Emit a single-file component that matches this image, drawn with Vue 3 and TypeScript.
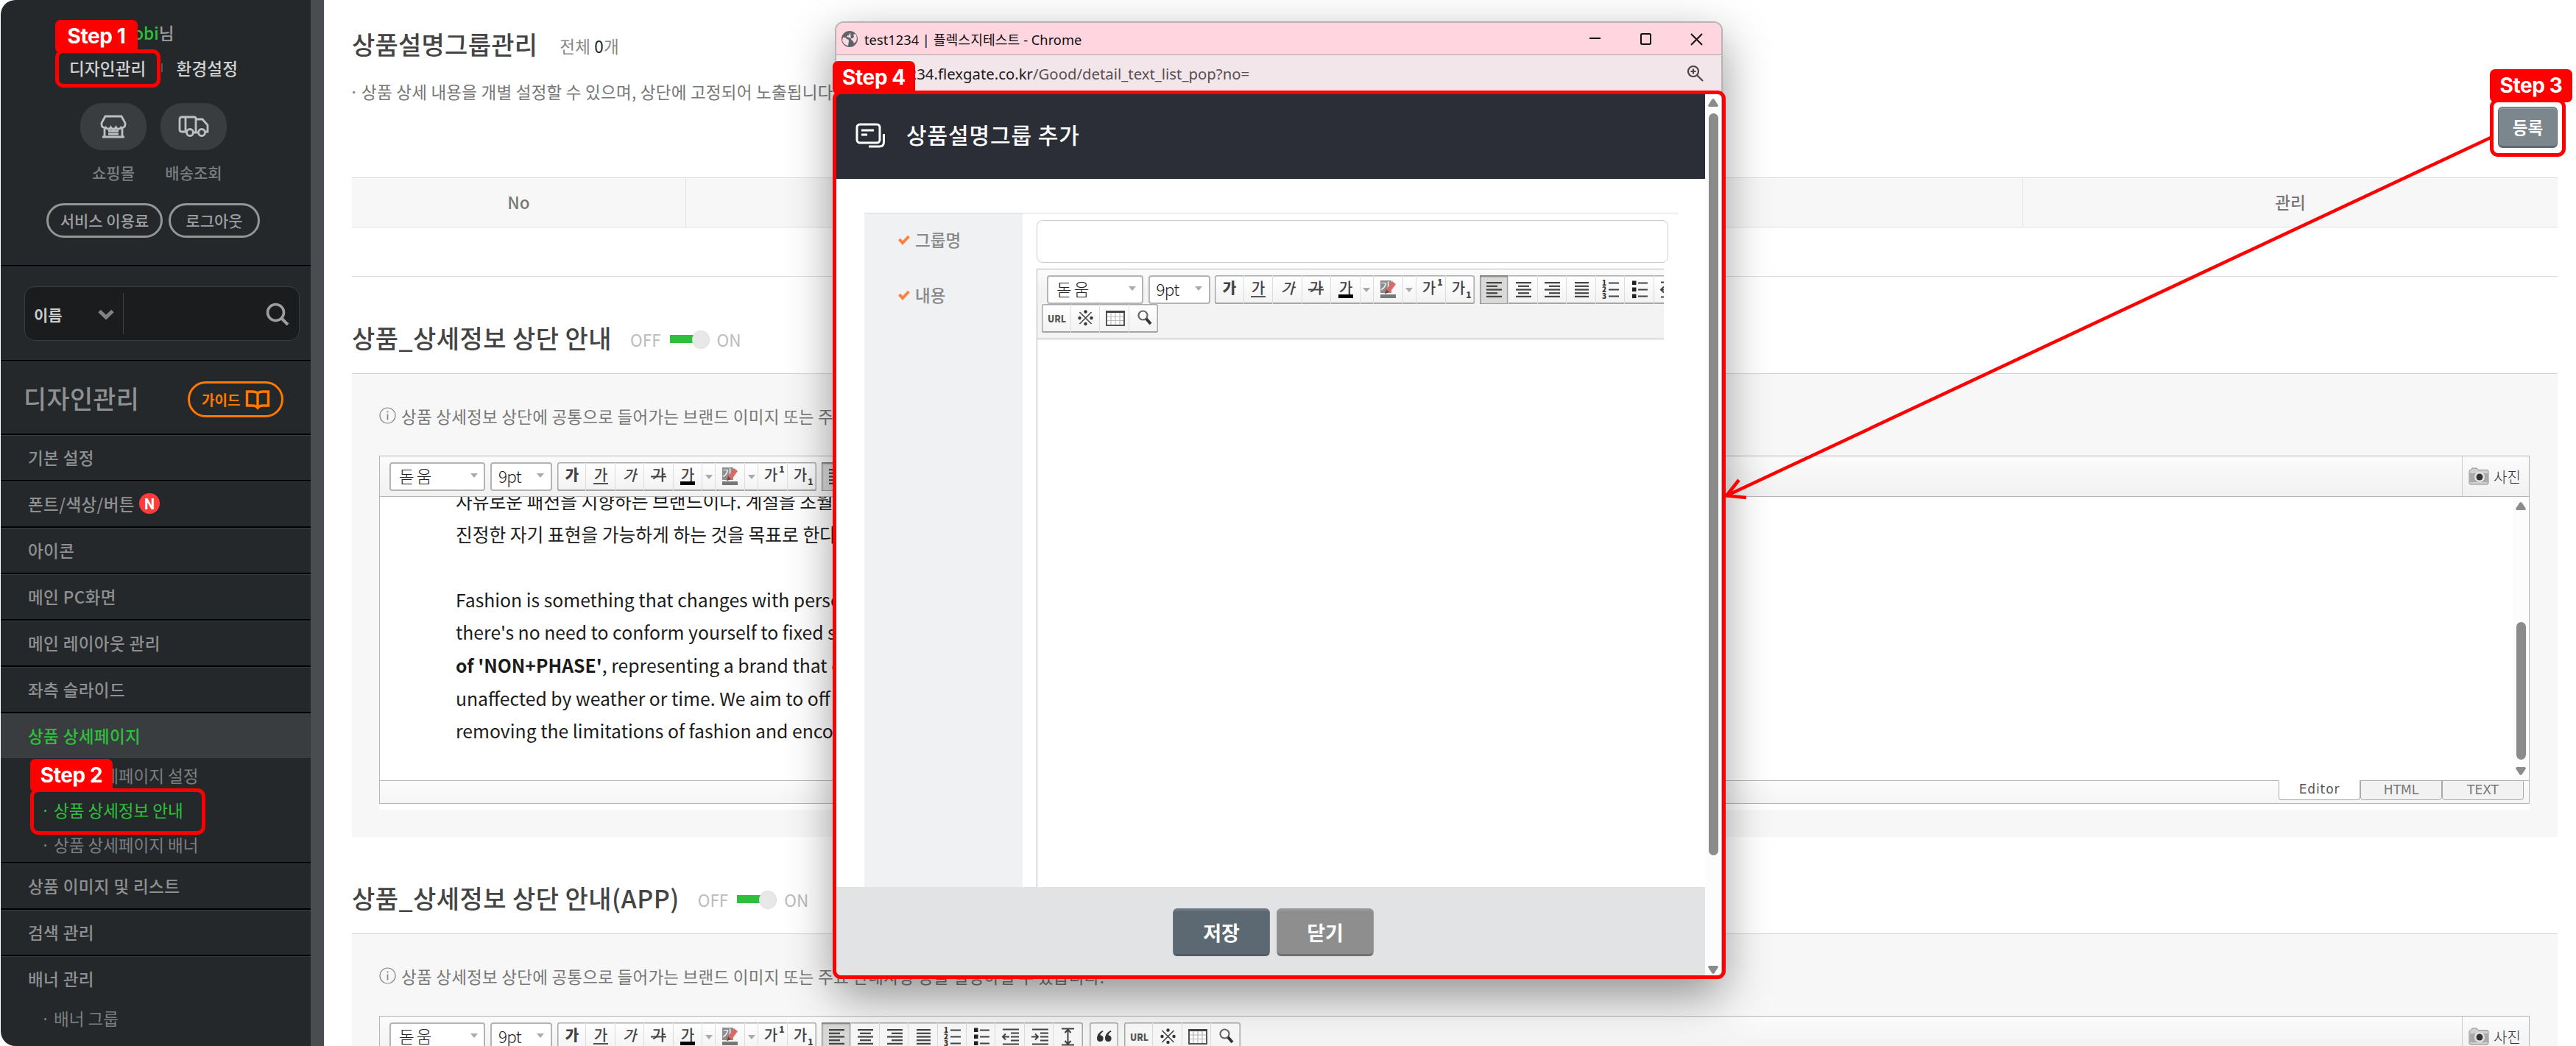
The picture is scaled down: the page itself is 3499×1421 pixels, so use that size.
<script setup lang="ts">
type Item = { label: string; badge?: boolean; active?: boolean; subs?: { label: string; on?: boolean }[] }

const menu: Item[] = [
  { label: '기본 설정' },
  { label: '폰트/색상/버튼', badge: true },
  { label: '아이콘' },
  { label: '메인 PC화면' },
  { label: '메인 레이아웃 관리' },
  { label: '좌측 슬라이드' },
  {
    label: '상품 상세페이지',
    active: true,
    subs: [{ label: '상품 상세페이지 설정' }, { label: '상품 상세정보 안내', on: true }, { label: '상품 상세페이지 배너' }],
  },
  { label: '상품 이미지 및 리스트' },
  { label: '검색 관리' },
  { label: '배너 관리', subs: [{ label: '배너 그룹' }] },
]

const sections = [
  { title: '상품_상세정보 상단 안내', body: true },
  { title: '상품_상세정보 상단 안내(APP)', body: false },
]

const ga = (extra = '', weight = 500, dx = 0) =>
  `<text x="${20 + dx}" y="25" font-size="20" font-weight="${weight}" text-anchor="middle" fill="#444">가</text>${extra}`
const bars = (rows: [number, number][]) =>
  rows.map(([x, w], i) => `<rect x="${x + 1}" y="${9 + i * 4.7}" width="${w}" height="2.2" fill="#444"/>`).join('')

const icons: Record<string, string> = {
  bold: ga('', 900),
  under: ga('<rect x="10" y="28" width="20" height="2" fill="#555"/>'),
  ital: '<g transform="translate(6.5 0) skewX(-14)">' + ga('', 500) + '</g>',
  strike: ga('<rect x="9" y="18.5" width="21" height="2" fill="#444"/>'),
  color: ga('<rect x="10" y="26" width="20" height="5" fill="#000"/>'),
  hl: '<rect x="9" y="7" width="15" height="17" fill="#8d8d8d"/><text x="16" y="21" font-size="15" text-anchor="middle" fill="#fff">가</text><rect x="9" y="26" width="21" height="5" fill="#777"/><path d="M15 25l2-6 8-11 5 4-8 11z" fill="#d96a68"/><path d="M15 25l2-6 4 4z" fill="#6b4a3a"/>',
  sup: ga('<text x="32" y="14" font-size="12" font-weight="900" text-anchor="middle" fill="#444">1</text>', 500, -3),
  sub: ga('<text x="31" y="31" font-size="12" font-weight="900" text-anchor="middle" fill="#444">1</text>', 500, -3),
  left: bars([[9, 21], [9, 15], [9, 21], [9, 15], [9, 21]]),
  center: bars([[9, 21], [12, 15], [9, 21], [12, 15], [9, 21]]),
  right: bars([[9, 21], [15, 15], [9, 21], [15, 15], [9, 21]]),
  full: bars([[10, 19], [10, 19], [10, 19], [10, 19], [10, 19]]),
  ol: '<g fill="#333" font-size="10" font-weight="900"><text x="9" y="14">1</text><text x="9" y="23">2</text><text x="9" y="32">3</text></g><path d="M18 10.500h14M18 19.500h14M18 28.500h14" stroke="#444" stroke-width="2"/>',
  ul: '<path d="M10 7.500h5.500v5.500h-5.500zM10 16.500h5.500v5.500h-5.500zM10 25.500h5.500v5.500h-5.500z" fill="#222"/><path d="M18 10.500h13M18 19.500h13M18 28.500h13" stroke="#444" stroke-width="2"/>',
  outdent: '<path d="M10 9.500h22M21 14.500h11M21 19.500h11M21 24.500h11M10 29.500h22M10 19.500h9M14 15.500l-4 4l4 4" stroke="#444" stroke-width="2" fill="none"/>',
  indent: '<path d="M10 9.500h22M21 14.500h11M21 19.500h11M21 24.500h11M10 29.500h22M9 19.500h9M14 15.500l4 4l-4 4" stroke="#444" stroke-width="2" fill="none"/>',
  height: '<path d="M11 8.500h17M11 30.500h17M19.500 9v21M15.500 14l4-4.500l4 4.500M15.500 25l4 4.500l4-4.500" stroke="#444" stroke-width="2" fill="none"/>',
  quote: '<path d="M18 11c-5 2-8 6-8 11a4.300 4.300 0 1 0 4.500-4.500c0-2 1.500-4 4-5zM29 11c-5 2-8 6-8 11a4.300 4.300 0 1 0 4.500-4.500c0-2 1.500-4 4-5z" fill="#333"/>',
  url: '<text x="20.500" y="24.500" font-size="13.500" font-weight="900" text-anchor="middle" fill="#555" textLength="25" lengthAdjust="spacingAndGlyphs">URL</text>',
  special: '<path d="M12.500 11l16 16M28.500 11l-16 16" stroke="#444" stroke-width="1.600"/><g fill="#333"><circle cx="20.500" cy="10.500" r="2.200"/><circle cx="20.500" cy="27" r="2.200"/><circle cx="12.500" cy="19" r="2.200"/><circle cx="28.500" cy="19" r="2.200"/></g>',
  table: '<rect x="9" y="10" width="24" height="19" fill="#fff" stroke="#555" stroke-width="2"/><path d="M8 10.500h26" stroke="#444" stroke-width="3"/><path d="M15 12v16M21 12v16M27 12v16M10 17h22M10 22.500h22" stroke="#bbb" stroke-width="1.200"/>',
  find: '<circle cx="18.500" cy="15.500" r="6" fill="#fff" stroke="#666" stroke-width="2.200"/><path d="M23 20l6 7" stroke="#333" stroke-width="4"/>',
}

const format = ['bold', 'under', 'ital', 'strike', 'color', 'caret', 'hl', 'caret', 'sup', 'sub']
const align = ['left', 'center', 'right', 'full', 'ol', 'ul', 'outdent', 'indent', 'height']
const insert = ['url', 'special', 'table', 'find']
const mainGroups = [format, align, ['quote'], insert]
</script>

<template>
  <div class="page">
    <aside class="side">
      <div class="profile">
        <p class="who"><b>mobi</b>님</p>
        <p class="links"><span>디자인관리</span><i></i><span>환경설정</span></p>
        <div class="quick">
          <div>
            <span class="pill">
              <svg width="36" height="32" viewBox="0 0 36 32" fill="none" stroke="#bdbfc0" stroke-width="2.8">
                <path d="M7 2h22l5 9v2a4 4 0 0 1-5.500 4a4 4 0 0 1-7 0a4 4 0 0 1-7 0a4 4 0 0 1-7 0a4 4 0 0 1-5.500-4v-2zM6 18v11M30 18v11M3 30h30M11 22h14M11 26h14" />
              </svg>
            </span>
            <em>쇼핑몰</em>
          </div>
          <div>
            <span class="pill">
              <svg width="42" height="30" viewBox="0 0 42 30" fill="none" stroke="#bdbfc0" stroke-width="2.800">
                <path d="M24 22V4q0-2-2-2H5Q2 2 2 5v14q0 3 3 3h6M10 2v20M21 23h6M24 5h9l7 8v9h-3" />
                <circle cx="16" cy="23" r="4.500" /><circle cx="32" cy="23" r="4.500" />
              </svg>
            </span>
            <em>배송조회</em>
          </div>
        </div>
        <div class="acts"><span class="fee">서비스 이용료</span><span class="out">로그아웃</span></div>
      </div>
      <div class="search">
        <div class="box">
          <span class="kind">이름</span>
          <svg class="chev" width="22" height="15" viewBox="0 0 22 15"><path d="M2 2.500l9 8.500l9-8.500" fill="none" stroke="#808284" stroke-width="5" /></svg>
          <i></i>
          <svg class="mag" width="32" height="32" viewBox="0 0 32 32" fill="none" stroke="#9c9e9f" stroke-width="3.600">
            <circle cx="13.500" cy="13.500" r="11" /><path d="M21 21l9 9" stroke-width="4" />
          </svg>
        </div>
      </div>
      <div class="cap">
        <h1>디자인관리</h1>
        <span class="guide">가이드
          <svg width="34" height="28" viewBox="0 0 34 28" fill="none" stroke="#ff7800" stroke-width="3.400">
            <path d="M17 5.500Q15 3 10 3H2.500v19H10q5 0 7 3q2-3 7-3h7.500V3H24q-5 0-7 2.500zM17 5v19" />
          </svg>
        </span>
      </div>
      <template v-for="m in menu" :key="m.label">
        <div class="item" :class="{ active: m.active }">{{ m.label }}<span v-if="m.badge" class="n">N</span></div>
        <div v-for="s in m.subs" :key="s.label" class="sub" :class="{ on: s.on }"><i>·</i>{{ s.label }}</div>
      </template>
    </aside>
    <div class="strip"></div>

    <main>
      <div class="head">
        <h2>상품설명그룹관리</h2>
        <span class="cnt">전체 <b>0</b>개</span>
      </div>
      <p class="desc"><i>·</i>상품 상세 내용을 개별 설정할 수 있으며, 상단에 고정되어 노출됩니다.</p>
      <div class="regrow"><span class="reg">등록</span></div>
      <div class="tbl">
        <div class="th"><span class="c1">No</span><span class="c2"></span><span class="c3">관리</span></div>
        <div class="tr"></div>
      </div>

      <section v-for="s in sections" :key="s.title">
        <div class="shead">
          <h2>{{ s.title }}</h2>
          <span class="tg">OFF<span class="sw"><i></i></span>ON</span>
        </div>
        <div class="panel">
          <p class="info">
            <svg width="23" height="23" viewBox="0 0 23 23" fill="none" stroke="#888" stroke-width="1.200"><circle cx="11.500" cy="11.500" r="10.500" /><path d="M11.500 9.500v8M11.500 5.500v2" stroke-width="1.700" /></svg>
            상품 상세정보 상단에 공통으로 들어가는 브랜드 이미지 또는 주요 안내사항 등을 설정하실 수 있습니다.
          </p>
          <div class="editor">
            <div class="bar">
              <span class="sel f">돋움<i></i></span>
              <span class="sel z">9pt<i></i></span>
              <span v-for="(g, gi) in mainGroups" :key="gi" class="grp">
                <span v-for="(k, i) in g" :key="i" class="btn" :class="{ ct: k === 'caret', dn: k === 'left' }">
                  <i v-if="k === 'caret'"></i>
                  <svg v-else width="39" height="39" viewBox="0 0 39 39" v-html="icons[k]"></svg>
                </span>
              </span>
              <span class="photo">
                <svg width="28" height="24" viewBox="0 0 28 24"><path d="M3 3.500L5 1h6l2 2.500h12q2 0 2 2V21q0 2-2 2H3q-2 0-2-2V5.500q0-2 2-2z" fill="#d0d0d0" stroke="#8d8d8d" /><path d="M1.500 8h25v12h-25z" fill="#aaa" /><circle cx="15" cy="13" r="7" fill="#e3e3e3" /><circle cx="15" cy="13" r="4.500" fill="#333" /></svg>
                사진
              </span>
            </div>
            <div class="doc">
              <div class="txt">
                <template v-if="s.body">
                  <p>자유로운 패션을 지향하는 브랜드이다. 계절을 초월</p>
                  <p>진정한 자기 표현을 가능하게 하는 것을 목표로 한다</p>
                  <p>&nbsp;</p>
                  <p>Fashion is something that changes with perso</p>
                  <p>there's no need to conform yourself to fixed s</p>
                  <p><b>of 'NON+PHASE'</b>, representing a brand that e</p>
                  <p>unaffected by weather or time. We aim to off</p>
                  <p>removing the limitations of fashion and enco</p>
                </template>
              </div>
              <div class="sb"><i class="up"></i><i class="th2"></i><i class="dw"></i></div>
            </div>
            <div class="foot"><span class="tab cur">Editor</span><span class="tab">HTML</span><span class="tab">TEXT</span></div>
          </div>
        </div>
      </section>
    </main>

    <div class="win">
      <div class="tbar">
        <svg width="24" height="24" viewBox="0 0 24 24"><circle cx="12" cy="12" r="11" fill="#5f6368" /><path d="M3 10q4-1 5 2q3 0 3 3l-1 6q-6-1-8-7zM13 3l-2 4q-3 0-3 2q4 1 6 2t4-2l-1-3l3-1q3 5 1 10l-3 3q-1-4-4-5" fill="#fbd9e0" /></svg>
        <span class="wt">test1234 | 플렉스지테스트 - Chrome</span>
        <svg class="ctl" width="154" height="18" viewBox="0 0 154 18" fill="none" stroke="#111" stroke-width="2"><path d="M0 8h15" /><rect x="70" y="2" width="13" height="14" rx="1.500" /><path d="M138 2l15 15M153 2l-15 15" /></svg>
      </div>
      <div class="ubar">
        <span class="url"><b>test1234.flexgate.co.kr</b>/Good/detail_text_list_pop?no=</span>
        <svg width="24" height="24" viewBox="0 0 24 24" fill="none" stroke="#4d4247" stroke-width="2.200"><circle cx="9" cy="9" r="7" /><path d="M14 14l8 8M5.500 9h7M9 5.500v7" /></svg>
      </div>
      <div class="view">
        <div class="pg">
          <div class="phead">
            <svg width="42" height="34" viewBox="0 0 42 34" fill="none" stroke="#fff" stroke-width="3"><rect x="2" y="2" width="31" height="25" rx="4" /><path d="M8 10h17M8 16h8M38.500 15v11q0 6-6 6H18" /></svg>
            <h3>상품설명그룹 추가</h3>
          </div>
          <div class="form">
            <div class="lab">
              <p v-for="l in ['그룹명', '내용']" :key="l"><svg width="16" height="14" viewBox="0 0 16 14"><path d="M1.500 6l4.500 5l8.500-9" fill="none" stroke="#ff8142" stroke-width="4" /></svg><span>{{ l }}</span></p>
            </div>
            <div class="fld">
              <div class="inp"></div>
              <div class="ped">
                <div class="pbar">
                  <div class="r1">
                    <span class="sel f">돋움<i></i></span>
                    <span class="sel z">9pt<i></i></span>
                    <span v-for="(g, gi) in [format, align]" :key="gi" class="grp">
                      <span v-for="(k, i) in g" :key="i" class="btn" :class="{ ct: k === 'caret', dn: k === 'left' }">
                        <i v-if="k === 'caret'"></i>
                        <svg v-else width="39" height="39" viewBox="0 0 39 39" v-html="icons[k]"></svg>
                      </span>
                    </span>
                  </div>
                  <div class="r2">
                    <span class="grp">
                      <span v-for="k in insert" :key="k" class="btn"><svg width="39" height="39" viewBox="0 0 39 39" v-html="icons[k]"></svg></span>
                    </span>
                  </div>
                </div>
              </div>
            </div>
          </div>
          <div class="pfoot"><span class="ok">저장</span><span class="no">닫기</span></div>
        </div>
        <div class="vsb"><i class="up"></i><i class="vt"></i><i class="dw"></i></div>
      </div>
    </div>

    <svg class="arrow" width="1060" height="520" viewBox="0 0 1060 520" fill="none" stroke="#f00" stroke-width="4.500"><path d="M1046 17L9 503M25 482L8 503.500L35 506" /></svg>
    <div class="ring g1"></div><div class="step s1">Step 1</div>
    <div class="ring g2"></div><div class="step s2">Step 2</div>
    <div class="ring g3"></div><div class="step s3">Step 3</div>
    <div class="ring g4"></div><div class="step s4">Step 4</div>
  </div>
</template>

<style>
body { margin: 0; background: #fff; }
</style>

<style scoped>
* { box-sizing: border-box; }
p, h1, h2, h3 { margin: 0; font-weight: 500; }
i, em { font-style: normal; }
svg { display: block; flex: none; letter-spacing: 0; }
.page { position: relative; display: flex; width: 3499px; height: 1421px; overflow: hidden; background: #fff; font-family: "Noto Sans CJK KR", "Noto Sans CJK SC", sans-serif; font-size: 22.5px; color: #666; white-space: nowrap; }

.side { width: 421px; margin-left: 1px; height: 1421px; background: #25282b; border-radius: 20px 0 0 20px; overflow: hidden; flex: none; color: #8e9092; }
.strip { width: 18px; background: #494d50; flex: none; }
.profile { height: 360px; }
.who { padding: 22px 0 0 159px; height: 68px; line-height: 45px; color: #9b9d9e; }
.who b { color: #2ec03c; font-weight: 500; }
.links { display: flex; align-items: center; padding-left: 93px; height: 48px; color: #d0d1d2; letter-spacing: 0.2px; }
.links i { width: 2px; height: 12px; background: #55585a; margin: 0 19px 0 20px; }
.quick { display: flex; gap: 19px; padding: 24px 0 0 108px; }
.quick div { width: 90px; display: flex; flex-direction: column; align-items: center; }
.pill { width: 90px; height: 64px; border-radius: 30px; background: #3a3d40; display: flex; align-items: center; justify-content: center; }
.quick em { font-size: 21px; line-height: 32px; margin-top: 14px; color: #7c7e80; font-weight: 500; }
.acts { display: flex; gap: 8px; padding: 26px 0 0 62px; font-size: 21px; color: #9d9fa0; }
.acts span { height: 47px; border: 3px solid #959595; border-radius: 24px; display: flex; align-items: center; justify-content: center; padding-bottom: 2px; font-weight: 500; }
.fee { width: 158px; }
.out { width: 124px; }
.search, .cap, .item { border-top: 2px solid #000; box-shadow: inset 0 1px 0 #3a3d40; }
.search { height: 129px; padding: 27px 0 0 32px; }
.box { width: 374px; height: 74px; border: 1px solid #3a3d40; border-radius: 14px; background: #1b1c1d; display: flex; align-items: center; padding-left: 12px; padding-top: 3px; }
.kind { font-size: 21px; font-weight: 700; color: #c8c8c8; width: 87px; margin-top: -2px; }
.box i { width: 1px; height: 56px; background: #3f4245; margin: -3px 193px 0 12px; }
.mag { margin-top: -2px; }
.cap { height: 100px; display: flex; align-items: center; padding: 5px 0 0 31px; }
.cap h1 { font-size: 33.75px; width: 223px; line-height: 50px; margin-top: -4px; letter-spacing: 0.4px; }
.guide { width: 130px; height: 49px; border: 3px solid #ff7800; border-radius: 25px; font-size: 19px; font-weight: 700; color: #ff7800; display: flex; align-items: center; padding-left: 16px; gap: 7px; line-height: 40px; }
.item { height: 63px; padding: 0 0 2px 37px; display: flex; align-items: center; font-weight: 500; letter-spacing: 0.4px; }
.item.active { background: #3a3d40; color: #2ec03c; }
.n { width: 28px; height: 28px; border-radius: 50%; background: #ff3b3b; color: #fff; font: 700 20px/30px Roboto, sans-serif; letter-spacing: 0; text-align: center; margin-left: 6px; margin-top: 1px; }
.sub { height: 47px; line-height: 46px; padding-left: 58px; color: #7c7e80; display: flex; }
.sub i, .desc i { width: 8px; margin: 0 10px 0 -4px; text-align: center; display: flex; justify-content: center; }
.sub i { margin: 0 9px 0 0; width: 5px; }
.sub.on { color: #2ec03c; }

main { width: 2996px; margin-left: 38px; height: 1421px; overflow: hidden; flex: none; }
h2 { font-size: 34px; color: #444; line-height: 50px; letter-spacing: 0.45px; }
.head { display: flex; height: 107px; padding-top: 35px; }
.head h2 { letter-spacing: 0.25px; }
.cnt { margin-left: 30px; line-height: 54px; color: #888; letter-spacing: 0.2px; }
.cnt b { color: #222; font-weight: 400; }
.desc { display: flex; height: 38px; line-height: 35px; color: #777; letter-spacing: 0.25px; }
.desc { font-weight: 400; }
.desc i { margin: 0 6px 0 -1px; width: 8px; }
.regrow { display: flex; justify-content: flex-end; height: 96px; }
.reg { width: 81px; height: 56px; border-radius: 6px; background: #7b868d; border: 1px solid #5f696f; border-bottom-width: 3px; box-shadow: inset 0 2px 0 #929ca2; color: #fff; font-weight: 700; display: flex; align-items: center; justify-content: center; }
.tbl { border-top: 1px solid #ddd; }
.th { display: flex; height: 67px; border-bottom: 1px solid #ddd; background: #f7f7f7; color: #777; line-height: 65px; text-align: center; font-weight: 500; }
.th span { border-right: 1px solid #e5e5e5; }
.c1 { width: 454px; }
.c2 { width: 1816px; }
.th .c3 { flex: 1; border: 0; }
.tr { height: 67px; border-bottom: 1px solid #ddd; }

.shead { height: 131px; padding-top: 58px; display: flex; }
.tg { display: flex; align-items: center; height: 53px; margin-left: 25px; color: #bbb; }
.sw { width: 54px; height: 25px; margin: 1px 10px 0 12px; display: flex; align-items: center; background: linear-gradient(#2ec03c, #2ec03c) 0 6px / 46px 11px no-repeat; border-radius: 6px; justify-content: flex-end; }
.sw i { width: 24px; height: 25px; border-radius: 50%; background: #e8e8e8; border: 1px solid #ddd; }
.panel { height: 630px; border-top: 1px solid #d5d5d5; background: #f7f7f7; padding: 33px 38px 0 37px; }
.info { display: flex; align-items: center; gap: 7px; height: 47px; margin-bottom: 31px; color: #777; letter-spacing: 0.25px; font-weight: 400; }
.editor { height: 473px; border: 1px solid #b5b5b5; background: #fff; box-shadow: 0 8px 0 #fff; }
.bar { display: flex; gap: 7px; height: 55px; border-bottom: 1px solid #b5b5b5; padding: 8px 0 0 13px; background: linear-gradient(#fbfbfb, #f1f1f1); }
.sel { height: 39px; border: 2px solid #b4b4b4; border-radius: 4px; background: #fff; display: flex; align-items: center; justify-content: space-between; font-weight: 300; color: #222; flex: none; }
.sel i, .btn i { width: 0; border: 5px solid transparent; border-top: 6px solid #aaa; border-bottom: 0; }
.f { width: 130px; padding: 0 8px 3px 11px; letter-spacing: 3px; }
.z { width: 84px; padding: 0 9px 3px 9px; letter-spacing: -0.8px; }
.grp { display: flex; height: 39px; border-radius: 3px; background: linear-gradient(#fff, #f2f2f2); box-shadow: inset 0 0 0 1.500px #a9a9a9, inset 0 -2px 0 #999; flex: none; }
.bar .grp:nth-of-type(5) { margin-left: 2px; }
.bar .grp:nth-of-type(6) { margin-left: 1px; }
.btn { width: 39.400px; height: 39px; display: flex; align-items: center; justify-content: center; border-right: 1px solid #ddd; overflow: hidden; flex: none; }
.btn:last-child { border: 0; }
.btn.ct { width: 18.500px; }
.btn.dn { background: #d9d9d7; box-shadow: inset 1px 2px 2px #777, inset -1px -1px 1px #999; }
.photo { margin-left: auto; margin-top: -8px; height: 54px; width: 91px; border-left: 1px solid #ccc; display: flex; align-items: center; padding-left: 8px; gap: 6px; font-size: 20px; font-weight: 300; color: #333; }
.doc { display: flex; height: 385px; overflow: hidden; }
.txt { flex: 1; padding: 0 0 0 103px; margin-top: -17px; font-size: 24.750px; line-height: 44.600px; color: #1c1c1c; }
.txt p { font-weight: 400; }
.sb { width: 22px; background: #fcfcfc; display: flex; flex-direction: column; align-items: center; padding-top: 7px; }
.up, .dw { width: 14px; height: 11px; background: #8b8b8b; clip-path: polygon(50% 0, 62% 10%, 100% 85%, 92% 100%, 8% 100%, 0 85%, 38% 10%); flex: none; }
.dw { transform: rotate(180deg); }
.th2 { width: 13px; height: 187px; border-radius: 7px; background: #8b8b8b; margin: 152px 0 10px; flex: none; }
.foot { height: 31px; border-top: 1px solid #b5b5b5; background: linear-gradient(#fcfcfc, #f5f5f5); display: flex; justify-content: flex-end; padding-right: 7px; }
.tab { width: 111px; height: 27px; margin-top: -1px; border: 1.500px solid #aaa; border-radius: 0 0 4px 4px; background: #f2f2f2; font: 17px/25px "DejaVu Sans", sans-serif; color: #777; text-align: center; }
.cur { background: #fff; border-top-color: #fff; color: #555; line-height: 22px; letter-spacing: 0.9px; }

.win { position: absolute; left: 1134px; top: 29px; width: 1206px; height: 1299px; border: 2px solid #b5b5b5; border-radius: 12px 12px 8px 8px; background: #fff; box-shadow: 0 24px 64px rgba(0, 0, 0, 0.42); overflow: hidden; }
.tbar { height: 44px; background: #ffd6df; border-bottom: 1px solid #b0a3a7; display: flex; align-items: center; padding: 0 25px 0 6px; font: 18.300px/44px "Noto Sans", "Noto Sans CJK KR", sans-serif; color: #111; }
.wt { margin-left: 8px; padding-top: 3px; }
.ctl { margin-left: auto; }
.ubar { height: 49px; background: #f2e6ea; display: flex; align-items: center; justify-content: space-between; padding: 0 23px 0 50px; font: 20.350px/48px "Noto Sans", sans-serif; color: #5a4f53; }
.ubar b { font-weight: 400; color: #1f1a1c; }
.view { display: flex; height: 1202px; }
.pg { width: 1180px; }
.phead { height: 119px; background: #2b2e37; display: flex; align-items: center; padding: 0 0 4px 26px; }
.phead svg { margin-top: 4px; }
h3 { font-size: 30px; color: #fff; margin-left: 27px; letter-spacing: 0.9px; }
.form { height: 916px; margin: 46px 37px 0 38px; border-top: 1px solid #ddd; display: flex; overflow: hidden; }
.lab { width: 215px; background: #eff1f3; padding: 12px 0 0 46px; color: #888; }
.lab p { display: flex; align-items: center; gap: 7px; height: 48px; margin-bottom: 27px; font-weight: 500; }
.lab span { margin-top: -3px; }
.fld { margin-left: 19px; padding-top: 9px; width: 858px; }
.inp { height: 58px; border: 1px solid #ccc; border-radius: 8px; }
.ped { margin-top: 8px; width: 852px; height: 860px; border: 1px solid #b5b5b5; border-right: 0; }
.pbar { height: 95px; border-bottom: 1px solid #b5b5b5; background: linear-gradient(#fbfbfb, #f3f3f3 30%); overflow: hidden; padding: 8px 0 0 6px; }
.pbar .btn { width: 39.500px; }
.pbar .btn.ct { width: 18.500px; }
.r1 { display: flex; gap: 6.500px; padding-left: 7px; }
.r1 .f { width: 131px; }
.r2 { display: flex; }
.pfoot { height: 120px; background: #e1e3e5; display: flex; gap: 9px; padding: 29px 0 0 457px; }
.pfoot span { width: 132px; height: 65px; border-radius: 6px; color: #fff; font-size: 27px; font-weight: 700; display: flex; align-items: center; justify-content: center; background: #5d6972; border: 1.500px solid #6f7a83; border-top-width: 3px; border-bottom: 3px solid #525c64; }
.pfoot .no { background: #8e8e8e; border-color: #999 #999 #707070; }
.vsb { flex: 1; background: #fcfcfc; display: flex; flex-direction: column; align-items: center; padding-top: 10px; }
.vt { width: 13px; height: 1008px; border-radius: 7px; background: #8b8b8b; margin: 9px 0 150px; flex: none; }

.arrow { position: absolute; left: 2337px; top: 170px; }
.ring { position: absolute; border: 5px solid #f00; border-radius: 11px; }
.step { position: absolute; height: 45px; width: 112px; border-radius: 7px 7px 0 7px; background: #f00; color: #fff; font: 700 28px/44px Inter, sans-serif; letter-spacing: -0.4px; text-align: center; }
.g1 { left: 75px; top: 67px; width: 143px; height: 52px; }
.s1 { left: 75px; top: 27px; }
.g2 { left: 41px; top: 1071px; width: 238px; height: 63px; }
.s2 { left: 41px; top: 1031px; }
.g3 { left: 3382px; top: 134px; width: 103px; height: 79px; }
.s3 { left: 3382px; top: 94px; border-radius: 7px; }
.g4 { left: 1131px; top: 123px; width: 1213px; height: 1207px; }
.s4 { left: 1131px; top: 83px; }
</style>
